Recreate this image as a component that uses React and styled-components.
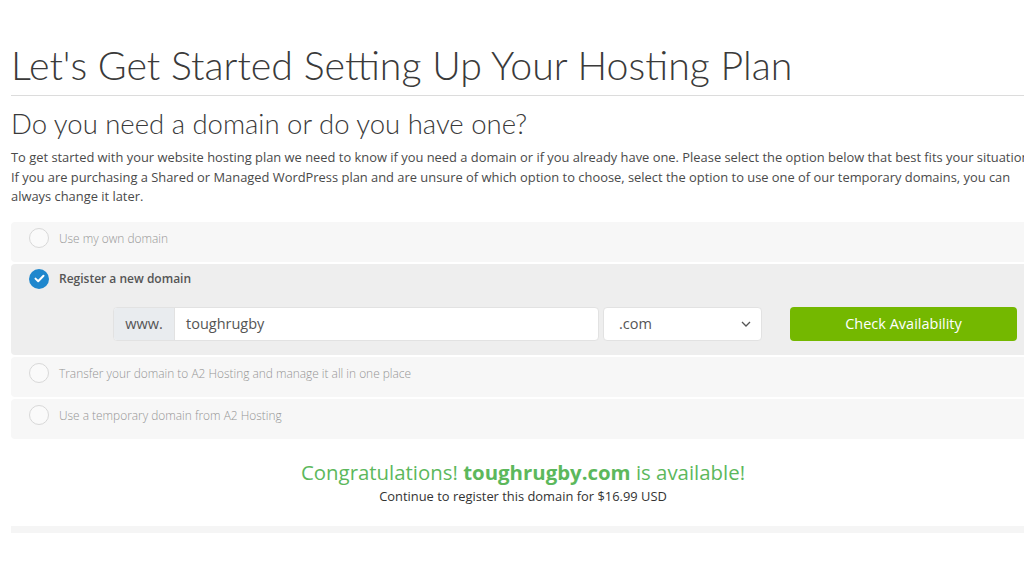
import React from "react";
import styled, { createGlobalStyle } from "styled-components";

const Global = createGlobalStyle`
  html, body { margin: 0; padding: 0; background: #fff; overflow: hidden; }
  body { font-family: "Open Sans", "Liberation Sans", sans-serif; color: #444; }
  * { box-sizing: border-box; }
`;

const Page = styled.div`
  width: 1024px;
  height: 576px;
  overflow: hidden;
  padding-left: 11px;
  padding-top: 42px;
`;

const Container = styled.div`
  width: 1024px;
`;

const Title = styled.h1`
  margin: 0;
  font-family: "Lato", sans-serif;
  font-weight: 300;
  font-size: 39.3px;
  line-height: 46px;
  color: #3a3a3a;
`;

const Rule = styled.hr`
  border: 0;
  border-top: 1px solid #dcdcdc;
  margin: 7px 0 0 0;
`;

const Subtitle = styled.h2`
  margin: 10px 0 0 0;
  font-family: "Lato", sans-serif;
  font-weight: 300;
  font-size: 27.5px;
  line-height: 36px;
  color: #3a3a3a;
`;

const Intro = styled.p`
  margin: 6px 0 0 0;
  font-size: 12.9px;
  line-height: 19.5px;
  color: #4a4a4a;
  white-space: nowrap;
`;

const Options = styled.div`
  margin-top: 15px;
  display: flex;
  flex-direction: column;
  gap: 2px;
`;

const Option = styled.div`
  background: ${(p) => (p.$active ? "#eeeeee" : "#f7f7f7")};
  border-radius: 4px;
  padding: ${(p) => (p.$active ? "0 0 14px 18px" : "1px 0 9px 18px")};
`;

const OptionHead = styled.div`
  display: flex;
  align-items: center;
  gap: 10px;
  height: 30px;
`;

const Radio = styled.span`
  width: 20px;
  height: 20px;
  border-radius: 50%;
  border: 1px solid #d8d8d8;
  background: #fafafa;
  display: inline-flex;
  align-items: center;
  justify-content: center;
  flex: none;
`;

const Checked = styled.span`
  width: 20px;
  height: 20px;
  border-radius: 50%;
  background: #1f87cd;
  display: inline-flex;
  align-items: center;
  justify-content: center;
  flex: none;
`;

const Label = styled.span`
  font-size: ${(p) => (p.$active ? "12px" : "11.9px")};
  color: ${(p) => (p.$active ? "#555" : "#959595")};
  font-weight: ${(p) => (p.$active ? 600 : 300)};
`;

const FormRow = styled.div`
  display: flex;
  align-items: center;
  margin-top: 13px;
  padding-left: 84px;
`;

const InputGroup = styled.div`
  display: flex;
  width: 486px;
  height: 34px;
  border: 1px solid #e2e2e2;
  border-radius: 4px;
  overflow: hidden;
  background: #fff;
`;

const Addon = styled.span`
  width: 61px;
  background: #e9ecef;
  display: flex;
  align-items: center;
  justify-content: center;
  font-size: 14.5px;
  color: #555;
  border-right: 1px solid #e2e2e2;
`;

const TextInput = styled.div`
  flex: 1;
  display: flex;
  align-items: center;
  padding-left: 11px;
  font-size: 14.5px;
  color: #555;
`;

const Select = styled.div`
  margin-left: 4px;
  width: 159px;
  height: 34px;
  border: 1px solid #e2e2e2;
  border-radius: 4px;
  background: #fff;
  display: flex;
  align-items: center;
  justify-content: space-between;
  padding: 0 10px 0 15px;
  font-size: 14.5px;
  color: #555;
`;

const Button = styled.button`
  margin-left: 28px;
  width: 227px;
  height: 34px;
  border: 0;
  border-radius: 4px;
  background: #74b800;
  color: #fff;
  font-family: "Open Sans", sans-serif;
  font-size: 14.5px;
  cursor: pointer;
`;

const Result = styled.div`
  margin-top: 19px;
  text-align: center;
`;

const Congrats = styled.div`
  font-size: 20.4px;
  line-height: 28px;
  color: #5cb85c;
`;

const Domain = styled.strong`
  font-weight: 700;
`;

const Price = styled.div`
  font-size: 12.9px;
  line-height: 20px;
  color: #333;
  margin-top: 0;
`;

const BottomBar = styled.div`
  margin-top: 20px;
  height: 7px;
  background: #f5f5f5;
`;

function Check() {
  return (
    <svg width="11" height="9" viewBox="0 0 11 9" fill="none">
      <path d="M1.5 4.6 L4.2 7.2 L9.5 1.8" stroke="#fff" strokeWidth="2" strokeLinecap="round" strokeLinejoin="round" />
    </svg>
  );
}

function Chevron() {
  return (
    <svg width="10" height="6" viewBox="0 0 10 6" fill="none">
      <path d="M1 1 L5 5 L9 1" stroke="#555" strokeWidth="1.3" />
    </svg>
  );
}

export default function App() {
  return (
    <>
      <Global />
      <Page>
        <Container>
          <Title>Let's Get Started Setting Up Your Hosting Plan</Title>
          <Rule />
          <Subtitle>Do you need a domain or do you have one?</Subtitle>
          <Intro>
            To get started with your website hosting plan we need to know if you need a domain or if you already have one. Please select the option below that best fits your situation.
            <br />
            If you are purchasing a Shared or Managed WordPress plan and are unsure of which option to choose, select the option to use one of our temporary domains, you can
            <br />
            always change it later.
          </Intro>
          <Options>
            <Option>
              <OptionHead>
                <Radio />
                <Label>Use my own domain</Label>
              </OptionHead>
            </Option>
            <Option $active>
              <OptionHead>
                <Checked>
                  <Check />
                </Checked>
                <Label $active>Register a new domain</Label>
              </OptionHead>
              <FormRow>
                <InputGroup>
                  <Addon>www.</Addon>
                  <TextInput>toughrugby</TextInput>
                </InputGroup>
                <Select>
                  <span>.com</span>
                  <Chevron />
                </Select>
                <Button>Check Availability</Button>
              </FormRow>
            </Option>
            <Option>
              <OptionHead>
                <Radio />
                <Label>Transfer your domain to A2 Hosting and manage it all in one place</Label>
              </OptionHead>
            </Option>
            <Option>
              <OptionHead>
                <Radio />
                <Label>Use a temporary domain from A2 Hosting</Label>
              </OptionHead>
            </Option>
          </Options>
          <Result>
            <Congrats>
              Congratulations! <Domain>toughrugby.com</Domain> is available!
            </Congrats>
            <Price>Continue to register this domain for $16.99 USD</Price>
          </Result>
          <BottomBar />
        </Container>
      </Page>
    </>
  );
}
